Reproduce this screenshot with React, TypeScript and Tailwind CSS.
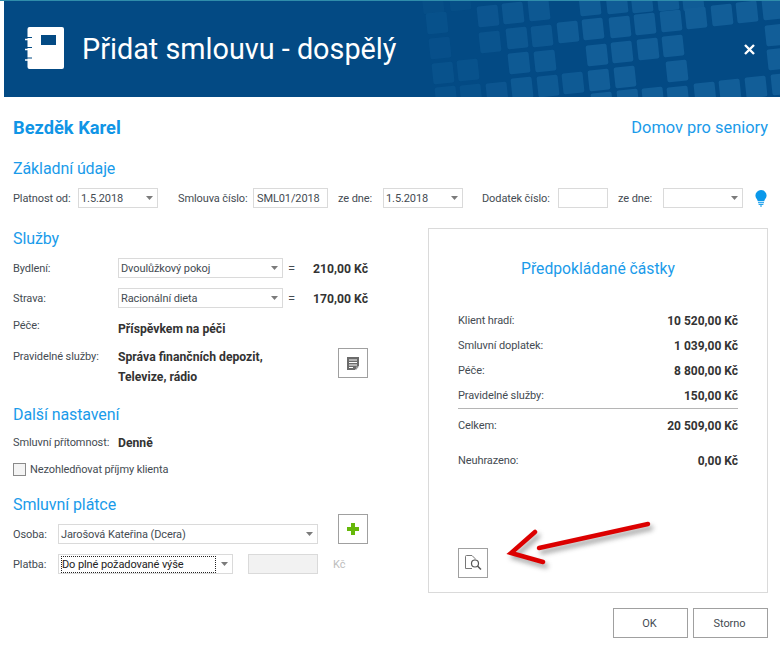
import type { ReactNode } from 'react'

/* ─── Header pattern ────────────────────────────────────────────────────────── */

// [x, y, opacity] of the tilted squares behind the header
const SQUARES: [number, number, number][] = [
  [433, 3, 0.2], [460, 0, 0.2], [590, 5, 0.9], [617, 3, 0.9], [642, 2, 0.9], [668, 0, 0.9], [693, 0, 0.9],
  [437, 23, 0.35], [488, 16, 0.6], [513, 13, 0.7], [539, 10, 0.7],
  [568, 32, 0.9], [593, 29, 1], [620, 27, 1], [645, 24, 1], [671, 21, 1], [696, 18, 1], [722, 15, 1], [747, 12, 1], [773, 9, 1],
  [490, 42, 0.5], [517, 38, 0.7], [542, 36, 0.7],
  [440, 48, 0.3], [597, 55, 1], [622, 52, 1], [648, 49, 1], [673, 46, 1], [776, 35, 1], [778, 59, 1],
  [519, 63, 0.8], [545, 61, 0.8], [443, 73, 0.4], [468, 70, 0.4], [677, 71, 1],
  [522, 88, 0.8], [548, 86, 0.8], [573, 83, 0.8], [599, 80, 1], [625, 77, 1],
  [446, 97, 0.4], [471, 95, 0.4], [497, 93, 0.6], [602, 103, 1], [628, 100, 1], [653, 98, 1], [678, 97, 1], [705, 93, 1], [730, 90, 1], [756, 87, 1], [782, 84, 1],
]

function HeaderPattern() {
  return (
    <svg className="absolute inset-0 h-full w-full" viewBox="4 1 776 96" aria-hidden="true">
      {SQUARES.map(([x, y, o]) => (
        <rect
          key={`${x}-${y}`}
          x={x - 10.5}
          y={y - 10.5}
          width="21"
          height="21"
          rx="2"
          fill="#125e98"
          opacity={o}
          transform={`rotate(-6 ${x} ${y})`}
        />
      ))}
    </svg>
  )
}

/* ─── Small controls ────────────────────────────────────────────────────────── */

function Caret() {
  return (
    <svg width="7" height="4" viewBox="0 0 7 4" className="shrink-0" aria-hidden="true">
      <path d="M0 0h7L3.500 4z" fill="#7b7b7b" />
    </svg>
  )
}

function Select({ value, className, focused }: { value?: string; className: string; focused?: boolean }) {
  return (
    <div className={`flex h-5 items-center border border-[#dadada] bg-white pr-1 ${className}`}>
      <span
        className={
          focused
            ? 'ml-[2px] mr-[5px] flex h-[17px] flex-1 items-center border border-dotted border-[#222] pt-[2px] text-[#222]'
            : 'flex-1 pl-[2px] pt-[2px]'
        }
      >
        {value}
      </span>
      <Caret />
    </div>
  )
}

function Heading({ children, className = '' }: { children: ReactNode; className?: string }) {
  return <h2 className={`flex h-5 items-center pt-[2px] text-[16px] leading-5 text-[#1a9bea] ${className}`}>{children}</h2>
}

function IconButton({ children, className = '' }: { children: ReactNode; className?: string }) {
  return (
    <button className={`flex h-[30px] w-[30px] shrink-0 items-center justify-center border border-[#a0a0a0] bg-white ${className}`}>
      {children}
    </button>
  )
}

function Strong({ children, className = '' }: { children: ReactNode; className?: string }) {
  return <b className={`text-[12.200px] tracking-normal text-[#333] ${className}`}>{children}</b>
}

function Label({ children, className = '' }: { children: ReactNode; className?: string }) {
  return <span className={`pt-[2px] ${className}`}>{children}</span>
}

function AmountRow({ label, value, className = '' }: { label: string; value: string; className?: string }) {
  return (
    <div className={`flex h-5 items-center justify-between pt-[2px] ${className}`}>
      <span>{label}</span>
      <b className="text-[12px] tracking-normal text-[#333]">{value}</b>
    </div>
  )
}

/* ─── Page ──────────────────────────────────────────────────────────────────── */

export default function App() {
  return (
    <div className="relative h-[648px] w-[780px] overflow-hidden bg-white font-['Roboto',sans-serif] text-[11px] tracking-[-0.1px] text-[#444b52]">
      <div className="h-[1px] bg-[#2f8dab]" />

      {/* Header */}
      <header className="relative ml-1 flex h-[96px] items-center bg-[#034a84] pl-[21px] pr-[25px] tracking-normal text-white">
        <HeaderPattern />
        <svg width="40" height="42" viewBox="25 27 40 42" className="relative mb-[2px] shrink-0" aria-hidden="true">
          <path
            fillRule="evenodd"
            d="M29.500 27h32.500a2 2 0 0 1 2 2v38a2 2 0 0 1-2 2H29.500a2 2 0 0 1-2-2V29a2 2 0 0 1 2-2zM41 35v10h15V35z"
            fill="#fff"
          />
          <path d="M27 37.500h5M27 47.500h5M27 58h5" stroke="#034a84" strokeWidth="1.200" />
          <path d="M25 39.500h7M25 49.500h7M25 60h7" stroke="#fff" strokeWidth="1.600" />
        </svg>
        <h1 className="relative ml-[17px] flex-1 text-[28.800px] leading-none">Přidat smlouvu - dospělý</h1>
        <svg width="11" height="11" viewBox="0 0 11 11" className="relative" aria-hidden="true">
          <path d="M1 1l9 9M10 1l-9 9" stroke="#fff" strokeWidth="2.400" />
        </svg>
      </header>

      <main className="pl-[13px] pr-3">
        {/* Client */}
        <div className="mt-[21px] flex h-5 items-center justify-between tracking-normal">
          <b className="text-[18.300px] text-[#1095e6]">Bezděk Karel</b>
          <span className="text-[16.400px] text-[#1a9bea]">Domov pro seniory</span>
        </div>

        {/* Základní údaje */}
        <Heading className="mt-5">Základní údaje</Heading>
        <div className="mt-[10px] flex h-5 items-center">
          <Label className="w-[65px]">Platnost od:</Label>
          <Select value="1.5.2018" className="w-20" />
          <Label className="ml-5 w-[75px]">Smlouva číslo:</Label>
          <div className="flex h-5 w-[75px] items-center border border-[#dadada] pl-[3px] pt-[2px]">SML01/2018</div>
          <Label className="ml-[10px] w-[45px]">ze dne:</Label>
          <Select value="1.5.2018" className="w-20" />
          <Label className="ml-[19px] w-[76px]">Dodatek číslo:</Label>
          <div className="h-5 w-[50px] border border-[#dadada]" />
          <Label className="ml-[10px] w-[45px]">ze dne:</Label>
          <Select className="w-20" />
          <svg width="12" height="17" viewBox="0 0 12 17" className="ml-3" aria-hidden="true">
            <path d="M6 0a5.600 5.600 0 0 1 5.600 5.600c0 2.600-2 3.600-2.400 5.600H2.800C2.400 9.200.4 8.200.4 5.600A5.600 5.600 0 0 1 6 0z" fill="#0a98ea" />
            <path d="M3 12.700h6M3.600 14.400h4.800M5 16h2" stroke="#0a98ea" strokeWidth="1" />
          </svg>
        </div>

        <div className="mt-5 flex justify-between">
          {/* Left column */}
          <div className="w-[355px]">
            <Heading>Služby</Heading>
            <div className="mt-[10px] flex h-5 items-center">
              <Label className="w-[105px]">Bydlení:</Label>
              <Select value="Dvoulůžkový pokoj" className="w-[165px]" />
              <Label className="ml-[5px] text-[13px]">=</Label>
              <Strong className="flex-1 pt-[2px] text-right">210,00 Kč</Strong>
            </div>
            <div className="mt-[10px] flex h-5 items-center">
              <Label className="w-[105px]">Strava:</Label>
              <Select value="Racionální dieta" className="w-[165px]" />
              <Label className="ml-[5px] text-[13px]">=</Label>
              <Strong className="flex-1 pt-[2px] text-right">170,00 Kč</Strong>
            </div>
            <div className="mt-[10px] flex h-5">
              <span className="w-[105px] leading-4">Péče:</span>
              <Strong className="pt-[1px] leading-5">Příspěvkem na péči</Strong>
            </div>
            <div className="mt-2 flex">
              <span className="w-[105px] pt-[1px] leading-5">Pravidelné služby:</span>
              <Strong className="flex-1 pt-[1px] leading-5">
                Správa finančních depozit,
                <br />
                Televize, rádio
              </Strong>
              <IconButton className="mt-[2px]">
                <svg width="12" height="13" viewBox="0 0 12 13" aria-hidden="true">
                  <path d="M0 0h12v8.500L8 13H0z" fill="#6b6b6b" />
                  <path d="M2 3h8M2 5.500h8M2 8h8M2 10.500h4" stroke="#fff" strokeWidth="1" />
                  <path d="M9 9.500h3L9 13z" fill="#9a9a9a" />
                </svg>
              </IconButton>
            </div>

            <Heading className="mt-[17px]">Další nastavení</Heading>
            <div className="mt-2 flex h-5 items-center">
              <Label className="w-[105px]">Smluvní přítomnost:</Label>
              <Strong className="pt-[2px]">Denně</Strong>
            </div>
            <label className="mt-[7px] flex h-5 items-center">
              <span className="h-[13px] w-[13px] border border-[#8a8a8a] bg-[#f4f4f4]" />
              <Label className="ml-1">Nezohledňovat příjmy klienta</Label>
            </label>

            <Heading className="mt-[15px]">Smluvní plátce</Heading>
            <div className="flex items-end">
              <Label className="flex h-5 w-[45px] items-center">Osoba:</Label>
              <Select value="Jarošová Kateřina (Dcera)" className="w-[260px]" />
              <IconButton className="ml-5">
                <svg width="12" height="12" viewBox="0 0 12 12" aria-hidden="true">
                  <path d="M4 0h4v4h4v4H8v4H4V8H0V4h4z" fill="#66b80a" />
                </svg>
              </IconButton>
            </div>
            <div className="mt-[10px] flex h-5 items-center">
              <Label className="w-[45px]">Platba:</Label>
              <Select value="Do plné požadované výše" focused className="w-[175px]" />
              <div className="ml-[15px] h-5 w-[70px] border border-[#dadada] bg-[#f2f2f2]" />
              <Label className="ml-[15px] text-[#bdbdbd]">Kč</Label>
            </div>
          </div>

          {/* Amounts panel */}
          <section className="flex h-[365px] w-[340px] flex-col border border-[#dadada] px-[29px]">
            <h2 className="mt-[29px] h-5 pt-[1px] text-center text-[15.700px] leading-5 tracking-normal text-[#1a9bea]">Předpokládané částky</h2>
            <AmountRow label="Klient hradí:" value="10 520,00 Kč" className="mt-[32px]" />
            <AmountRow label="Smluvní doplatek:" value="1 039,00 Kč" className="mt-[5px]" />
            <AmountRow label="Péče:" value="8 800,00 Kč" className="mt-[5px]" />
            <AmountRow label="Pravidelné služby:" value="150,00 Kč" className="mt-[5px]" />
            <div className="mt-[3px] h-[1px] bg-[#b5b5b5]" />
            <AmountRow label="Celkem:" value="20 509,00 Kč" className="mt-[6px]" />
            <AmountRow label="Neuhrazeno:" value="0,00 Kč" className="mt-[15px]" />
            <IconButton className="mt-[78px]">
              <svg width="17" height="16" viewBox="0 0 17 16" fill="none" aria-hidden="true">
                <path d="M7 .5H1.500a1 1 0 0 0-1 1v12h6.500" stroke="#777" />
                <path d="M7 .5l3 3v1" stroke="#777" />
                <circle cx="10" cy="8.500" r="3.500" stroke="#555" strokeWidth="1.200" />
                <path d="M12.500 11L16 14.500" stroke="#555" strokeWidth="1.500" />
              </svg>
            </IconButton>
          </section>
        </div>

        {/* Footer */}
        <div className="mt-[15px] flex justify-end gap-[5px]">
          <button className="h-[30px] w-[75px] border border-[#a0a0a0] bg-white pr-[2px] pt-[2px]">OK</button>
          <button className="h-[30px] w-[75px] border border-[#a0a0a0] bg-white pr-[2px] pt-[2px]">Storno</button>
        </div>
      </main>

      {/* Annotation arrow painted over the panel */}
      <svg className="absolute left-[500px] top-[510px]" width="170" height="70" viewBox="500 510 170 70" fill="none" aria-hidden="true">
        <defs>
          <filter id="arrow-shadow" x="-20%" y="-40%" width="140%" height="180%">
            <feGaussianBlur stdDeviation="2.500" />
          </filter>
        </defs>
        <g stroke="#555" strokeWidth="4.500" strokeLinecap="round" opacity="0.55" filter="url(#arrow-shadow)" transform="translate(3 4)">
          <path d="M648 524L539 548" />
          <path d="M535 532L511 553L543 562" />
        </g>
        <g stroke="#dc0000" strokeWidth="4.500" strokeLinecap="round">
          <path d="M648 524L539 548" />
          <path d="M535 532L511 553L543 562" />
        </g>
      </svg>
    </div>
  )
}
